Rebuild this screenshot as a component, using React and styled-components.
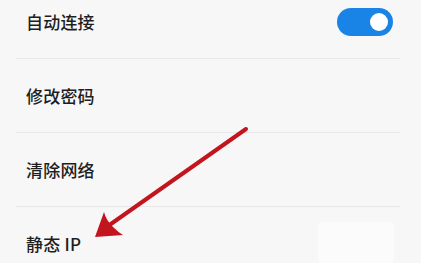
import React from 'react';
import styled, { createGlobalStyle } from 'styled-components';

const Global = createGlobalStyle`
  html, body {
    margin: 0;
    padding: 0;
    background: #f7f7f7;
    overflow: hidden;
  }
`;

const Page = styled.div`
  position: relative;
  width: 421px;
  height: 263px;
  overflow: hidden;
  background: #f7f7f7;
  font-family: "Noto Sans CJK SC", "Noto Sans", sans-serif;
`;

const List = styled.div`
  display: flex;
  flex-direction: column;
  margin-top: -15px;
  padding: 0 21px 0 16px;
`;

const Row = styled.div`
  display: flex;
  align-items: center;
  justify-content: space-between;
  height: 73px;
  padding: 0 7px 0 10px;
  border-bottom: ${(p) => (p.$last ? 'none' : '1px solid #e8e8e8')};
`;

const Label = styled.span`
  font-size: 17px;
  font-weight: 500;
  color: #1e1e1e;
  letter-spacing: 0.2px;
`;

const Toggle = styled.div`
  position: relative;
  width: 56px;
  height: 28px;
  border-radius: 14px;
  background: #1a84e6;

  &::after {
    content: '';
    position: absolute;
    top: 5px;
    right: 5px;
    width: 18px;
    height: 18px;
    border-radius: 50%;
    background: #ffffff;
  }
`;

const Watermark = styled.div`
  position: absolute;
  left: 318px;
  top: 222px;
  width: 76px;
  height: 41px;
  background: #fbfbfb;
  border-radius: 3px;
`;

const Arrow = styled.svg`
  position: absolute;
  left: 0;
  top: 0;
  pointer-events: none;
`;

const items = ['自动连接', '修改密码', '清除网络', '静态 IP'];

export default function App() {
  return (
    <Page>
      <Global />
      <List>
        {items.map((t, i) => (
          <Row key={t} $last={i === items.length - 1}>
            <Label>{t}</Label>
            {i === 0 && <Toggle />}
          </Row>
        ))}
      </List>
      <Watermark />
      <Arrow width="421" height="263" viewBox="0 0 421 263">
        <line x1="246" y1="129" x2="108" y2="226" stroke="#c2151d" strokeWidth="4" strokeLinecap="round" />
        <path d="M95 237 L104 212 Q106 220 113 227 Q118 232 123 235 Z" fill="#c2151d" />
      </Arrow>
    </Page>
  );
}
